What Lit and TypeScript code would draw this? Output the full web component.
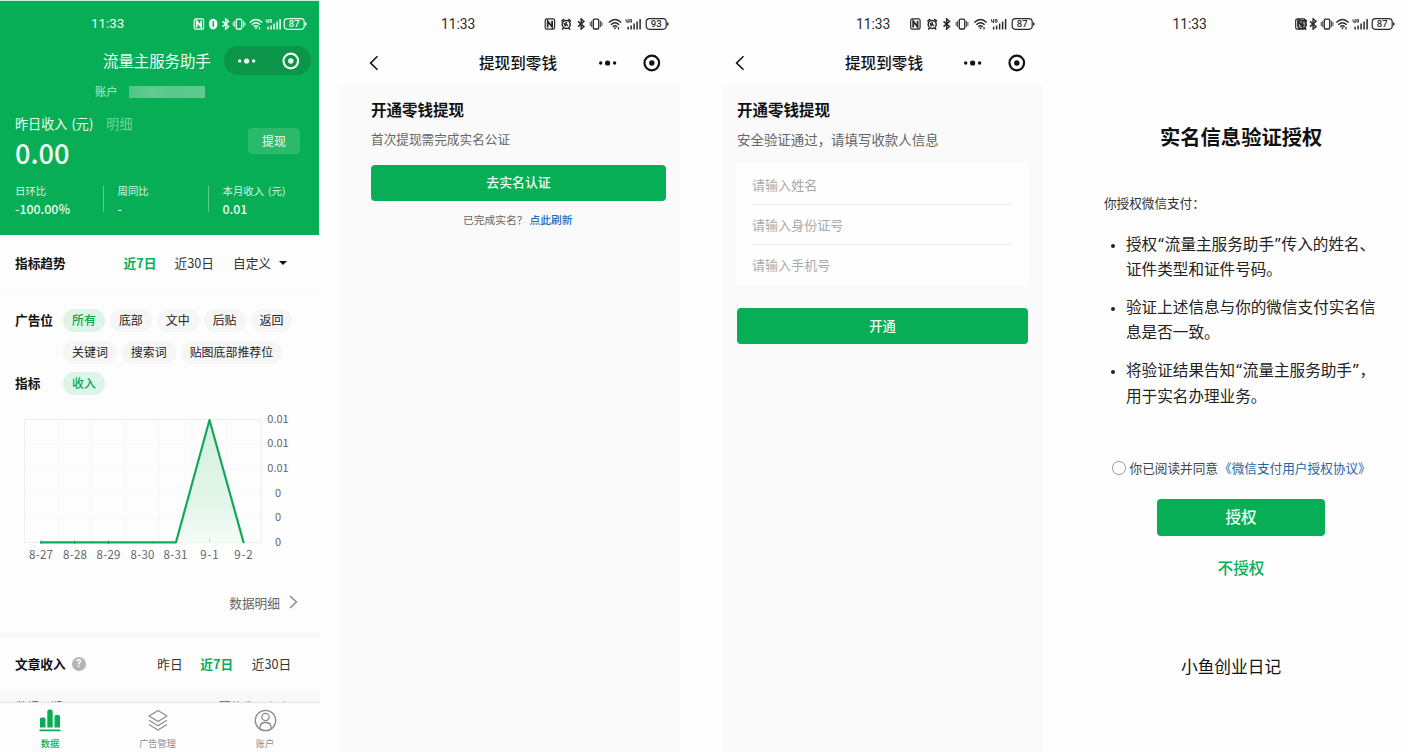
import { LitElement, html, svg, css } from "lit";
import { customElement, property } from "lit/decorators.js";

type Placed = [name: string, x: number];

const glyphs: Record<string, unknown> = {
  nfc: svg`<rect x=".7" y=".9" width="9.4" height="10.2" rx="1.6" fill="none" stroke="currentColor" stroke-width="1.2"/><path d="M3.2 9.4V3.2L7.6 8.8V2.800" fill="none" stroke="currentColor" stroke-width="1.8"/>`,
  alarm: svg`<circle cx="5.2" cy="6.4" r="4" fill="none" stroke="currentColor" stroke-width="1.5"/><path d="M.4 3.400L3.200 1M10 3.400L7.200 1M1.200 11.600l1.8-1.800M9.200 11.600L7.400 9.800M5.200 4v2.600l2 1M3.200 5l1.200 3.400" fill="none" stroke="currentColor" stroke-width="1.500"/>`,
  shield: svg`<path d="M4.600 .8Q9 1 9 6T4.600 11.400Q.4 11 .4 6T4.600 .8Z" fill="currentColor"/><path d="M4.800 3.200v5.600" stroke="#07ae56" stroke-width="1.500"/>`,
  bt: svg`<path d="M1 3.400L7 8.600L4.100 11.200V.8L7 3.400L1 8.600" fill="none" stroke="currentColor" stroke-width="1.400"/>`,
  vibrate: svg`<rect x="3.800" y="1.200" width="5.400" height="9.800" rx="1" fill="none" stroke="currentColor" stroke-width="1.300"/><path d="M.7 4v4M2.200 2.800v6.400M10.900 2.800v6.400M12.400 4v4" stroke="currentColor" stroke-width=".9"/>`,
  wifi: svg`<path d="M.4 4.500Q6.500-1.400 12.600 4.500M2.400 6.700Q6.500 2.800 10.600 6.700M4.300 8.700Q6.500 6.800 8.700 8.700" fill="none" stroke="currentColor" stroke-width="1.500"/><path d="M5 9.600h3l-1.500 2zM9.400 9h1.200v2.400H9.400z" fill="currentColor"/>`,
  signal: svg`<path d="M.6 1.200v2.600h2.400M2.600 1v4.200M4.200 1.600h1.800v2.600H4.400z" fill="none" stroke="currentColor" stroke-width=".9"/><path d="M2.600 11.400V8.800M5.600 11.400V7.400M8.600 11.400V5.600M11.600 11.400V3.600M14.600 11.400V1" stroke="currentColor" stroke-width="1.500"/>`,
};

@customElement("status-bar")
class StatusBar extends LitElement {
  @property({ attribute: false }) icons: Placed[] = [];
  @property({ attribute: false }) timeX = 0;
  @property({ attribute: false }) iconX = 0;
  @property({ attribute: false }) battery: [string, number] = ["87", 100];

  static styles = css`
    :host { display: block; height: 48px; color: #2a2a2a; }
    .row { display: flex; align-items: center; height: 48px; }
    .time { flex: none; font: var(--clock, 13.800px)/48px Roboto, "Noto Sans CJK SC", sans-serif; white-space: nowrap; }
    svg { display: block; flex: none; margin-left: auto; }
    text { font: 500 9.500px Roboto, sans-serif; }
  `;

  render() {
    const [level, bx] = this.battery;
    return html`<div class="row" style="padding-left:${this.timeX}px;width:${this.iconX + 126 - this.timeX}px">
      <span class="time">11:33</span>
      <svg width="126" height="12" viewBox="0 0 126 12">
        ${this.icons.map(([n, x]) => svg`<g transform="translate(${x} 0)">${glyphs[n]}</g>`)}
        <g transform="translate(${bx} 0)">
          <rect x=".7" y=".7" width="20" height="10.600" rx="3.200" fill="none" stroke="currentColor" stroke-width="1.200"/>
          <path d="M22.300 4.600v2.800" stroke="currentColor" stroke-width="1.500"/>
          <text x="10.700" y="9.400" text-anchor="middle" fill="currentColor">${level}</text>
        </g>
      </svg>
    </div>`;
  }
}

const menuIcon = html`<svg width="66" height="20" viewBox="0 0 66 20">
  <g fill="currentColor"><circle cx="2.700" cy="10" r="1.700"/><circle cx="9.600" cy="10" r="2.600"/><circle cx="16.600" cy="10" r="1.700"/><circle cx="53.800" cy="10" r="2.700"/></g>
  <circle cx="53.800" cy="10" r="7.300" fill="none" stroke="currentColor" stroke-width="2.200"/>
</svg>`;
const backIcon = html`<svg width="10" height="16" viewBox="0 0 10 16"><path d="M8.500 1.200L1.600 8l6.900 6.800" fill="none" stroke="currentColor" stroke-width="1.600"/></svg>`;

const days = ["8-27", "8-28", "8-29", "8-30", "8-31", "9-1", "9-2"];
const dayX = [41, 75, 108.500, 142.500, 175.500, 209.500, 243.500];
const scale = ["0.01", "0.01", "0.01", "0", "0", "0"];

@customElement("app-root")
class AppRoot extends LitElement {
  static styles = css`
    :host { display: block; width: 1408px; height: 752px; overflow: hidden; background: #fdfefd;
      font-family: "Noto Sans CJK SC", sans-serif; color: #111; }
    * { box-sizing: border-box; }
    svg { display: block; flex: none; }
    .board { display: grid; grid-template-columns: 340px 383px 337px 348px; height: 752px; }
    .phone { display: flex; flex-direction: column; height: 752px; white-space: nowrap; overflow: hidden; }
    .one { width: 320px; background: #fdfdfe; }
    .two { width: 340px; }
    .three { width: 320px; }
    .four { width: 348px; }

    .hero { width: 319px; height: 235px; background: #07ae56; color: #effcf3; border-top: 1px solid #c9f0dc; flex: none; }
    .hero status-bar { margin-top: -1px; color: #effcf3; --clock: 13.300px; }
    .brand { display: flex; align-items: center; height: 29px; margin-top: -2px; padding-left: 103px; }
    .brand .name { font-size: 15.400px; width: 121px; line-height: 26px; margin-top: -2px; }
    .capsule { width: 87px; height: 29px; border-radius: 15px; background: #0c9449; display: flex; align-items: center; padding-left: 12.500px; }
    .acct { display: flex; align-items: center; height: 20px; margin-top: 6px; padding-left: 95px; font-size: 11.300px; line-height: 18px; color: #b4e8c8; }
    .mask { width: 76px; height: 12px; margin: 2px 0 0 11px; background: linear-gradient(90deg, #51c585, #62cb92 30%, #58c88b 60%, #5fca90); filter: blur(.6px); }
    .income { display: flex; justify-content: space-between; height: 65px; margin-top: 11px; padding: 0 19px 0 15px; }
    .income .cap { font-size: 13.100px; line-height: 24px; display: flex; white-space: pre; }
    .veil { opacity: .45; filter: blur(.6px); margin-left: 13px; }
    .big { font-size: 27.200px; font-weight: 500; line-height: 38px; margin-top: -3px; }
    .draw { width: 52px; height: 26px; margin-top: 16px; border-radius: 4px; background: #2bb96b; font-size: 12px; line-height: 25px; text-align: center; }
    .facts { display: grid; grid-template-columns: 88px 105px 100px; padding-left: 15px; margin-top: 6px; }
    .fact { height: 34px; }
    .fact + .fact { padding-left: 14.500px; background: linear-gradient(#5ccb8b, #5ccb8b) no-repeat 0 3px / 1px 26px; }
    .fact .k { font-size: 10.400px; line-height: 18px; color: #d5f5e0; margin-top: -1px; }
    .unit { margin-left: 4px; }
    .fact .v { font-size: 12.400px; font-weight: 500; line-height: 18px; }

    .bar { display: flex; align-items: center; height: 56px; padding: 1px 0 0 15px; font-size: 12.700px; line-height: 20px; border-bottom: 2px solid #f9f8fa; color: #333; flex: none; }
    .bar b { font-weight: 700; color: #111; }
    .on { color: #07ae56; font-weight: 700; }
    .caret { width: 0; border: 4px solid transparent; border-top: 4.500px solid #111; border-bottom: 0; margin-left: 8px; }
    .filter { display: grid; grid-template-columns: 47px 1fr; padding-left: 15px; font-size: 12.700px; color: #111; flex: none; }
    .filter > span { line-height: 22px; font-weight: 700; }
    .first { margin-top: 18px; }
    .next { margin-top: 8px; }
    .chips { display: flex; flex-wrap: wrap; gap: 9px 5px; padding-left: 1px; }
    .chip { height: 23px; padding: 0 9px; border-radius: 12px; background: #f6f6f7; font-size: 11.950px; line-height: 22px; font-weight: 400; color: #222; }
    .chip.pick { background: #dcf5e6; color: #07a852; font-weight: 500; }
    .chart { margin-top: 5px; }
    .chart text { font-family: "Noto Sans CJK SC", sans-serif; font-size: 11px; fill: #666; }
    .chart .day { font-size: 11.500px; }
    .detail { display: flex; align-items: center; justify-content: flex-end; height: 60px; padding-right: 22px; margin-top: 2px; font-size: 12.700px; color: #666; flex: none; }
    .detail svg { margin-left: 9px; }
    .band { height: 6px; background: #f8f8f9; flex: none; }
    .article { border-bottom: 0; height: 54px; padding: 0 0 3px 15px; }
    .q { width: 14px; height: 14px; border-radius: 50%; background: #b4b4b4; color: #fff; font: 700 11px/14px Roboto, sans-serif; text-align: center; margin: 0 71.500px 0 6px; }
    .peek { height: 10px; overflow: hidden; display: flex; justify-content: space-between; padding: 7px 24px 0 16px; font-size: 11.600px; line-height: 14px; color: #555; background: #f8f8f9; flex: none; }
    .tabs { display: grid; grid-template-columns: 100px 115px 100px; height: 51px; border-top: 1px solid #e3e3e5; color: #8c8c8c; font-size: 9.200px; background: #fdfdfe; flex: none; }
    .tab { display: flex; flex-direction: column; align-items: center; padding-top: 6px; line-height: 14px; gap: 4px; }
    .tab.act { color: #07ae56; font-weight: 500; }

    .nav { display: flex; align-items: center; height: 36px; padding-bottom: 7px; font-weight: 500; font-size: 15.600px; line-height: 28px; }
    .nav .title { margin: -1px 0 0 100px; }
    .two .nav { padding-left: 29px; }
    .two .nav .title { width: 118.500px; }
    .three .nav { padding-left: 12px; }
    .three .nav .title { width: 117.500px; }
    .page { flex: 1; background: #f9faf9; }
    .two .page { padding: 13px 14px 0 31px; }
    .three .page { padding: 13px 15px 0 14px; }
    h2 { margin: 0; font-size: 15.500px; font-weight: 700; line-height: 24px; }
    .sub { font-size: 12.650px; line-height: 20px; margin-top: 8px; color: #666; }
    .three .sub { font-size: 13.450px; }
    .btn { display: block; height: 36px; border-radius: 4px; background: #07ae56; color: #f4fff8; text-align: center; font-weight: 500; font-size: 12.900px; line-height: 34px; }
    .two .btn { margin-top: 15.500px; }
    .hint { font-size: 10.750px; line-height: 18px; margin: 10px 0 0 92px; color: #666; }
    .link { color: #1a6bb8; }
    .hint .link { margin-left: 2px; font-weight: 500; }
    .card { margin: 14px 0 0 -1px; width: 293px; height: 122px; background: #fefefe; border-radius: 4px; padding: 2px 16px 0; }
    .field { height: 40px; font-size: 13.050px; line-height: 39px; color: #aaa; border-bottom: 1px solid #eee; }
    .field:last-child { border-bottom: 0; }
    .three .btn { margin-top: 22.500px; height: 36.500px; font-size: 13.300px; line-height: 35px; }

    h1 { margin: 73px 0 0 100px; font-size: 20.300px; font-weight: 700; line-height: 30px; }
    .lead { margin: 41.500px 0 0 44px; font-size: 12.600px; line-height: 20px; color: #333; }
    ul { list-style: none; margin: 19px 0 0; padding: 0 0 0 51px; font-family: "Noto Sans", "Noto Sans CJK SC", sans-serif; }
    li { display: flex; gap: 11px; margin-bottom: 12.500px; font-size: 15.600px; line-height: 25.400px; color: #222; }
    .dot { width: 4px; height: 4px; border-radius: 50%; background: #222; margin-top: 12px; flex: none; }
    .q1 { margin: 0 1px; }
    .agree { display: flex; align-items: center; margin: 34.500px 0 0 52px; height: 24px; font-size: 12.650px; color: #444; }
    .ring { width: 13.500px; height: 13.500px; border: 1px solid #999; border-radius: 50%; margin-right: 4px; flex: none; }
    .agree .link { color: #2a62a8; margin-left: 1px; }
    .four .btn { width: 168px; height: 36.500px; margin: 19.500px 0 0 97px; font-size: 15.500px; }
    .deny { width: 168px; margin: 19.500px 0 0 97px; text-align: center; color: #07ae56; font-weight: 500; font-size: 15.600px; line-height: 24px; }
    .sign { margin: 74px 0 0 121px; font-size: 16.700px; line-height: 26px; color: #111; }
  `;

  private chart() {
    const y0 = 142.500, y1 = 19.500;
    const cols = [58, 91, 125, 159, 192, 226];
    return html`<svg class="chart" width="319" height="170" viewBox="0 0 319 170">
      <defs><linearGradient id="fade" x1="0" y1="0" x2="0" y2="1"><stop offset="0" stop-color="#d3f0de"/><stop offset=".7" stop-color="#e3f6ea"/><stop offset="1" stop-color="#f6fcf8"/></linearGradient></defs>
      ${cols.map((x) => svg`<path d="M${x} ${y1}V${y0}" stroke="#f6f6f8"/>`)}
      ${[44, 68.500, 93, 118].map((y) => svg`<path d="M24.500 ${y}H261" stroke="#f9f9fa"/>`)}
      <rect x="24.500" y=${y1} width="236.500" height="123" fill="none" stroke="#ededf0"/>
      <path d="M176 ${y0}L209.500 ${y1}L243.500 ${y0}Z" fill="url(#fade)"/>
      <path d="M209.500 ${y0}v-4" stroke="#ccc"/>
      <path d="M41 142.300H176L209.500 20L243.500 142.300" fill="none" stroke="#14a65a" stroke-width="2.200" stroke-linejoin="round" stroke-linecap="round"/>
      <path d="M41 140.500v3.500M74.500 140.500v3.500M108.500 140.500v3.500" stroke="#14a65a"/>
      ${days.map((d, i) => svg`<text class="day" x=${dayX[i]} y="158.500" text-anchor="middle" textLength=${d.length === 4 ? 24 : 18.500}>${d}</text>`)}
      ${scale.map((s, i) => svg`<text x="278" y=${22.500 + i * 24.700} text-anchor="middle">${s}</text>`)}
    </svg>`;
  }

  render() {
    const chips = ["所有", "底部", "文中", "后贴", "返回", "关键词", "搜索词", "贴图底部推荐位"];
    return html`<div class="board">
      <section class="phone one">
        <div class="hero">
          <status-bar .timeX=${91} .iconX=${188} .battery=${["87", 95.500]}
            .icons=${[["nfc", 5.500], ["shield", 20.500], ["bt", 33.500], ["vibrate", 44.500], ["wifi", 61.500], ["signal", 77.500]]}></status-bar>
          <div class="brand"><span class="name">流量主服务助手</span><div class="capsule">${menuIcon}</div></div>
          <div class="acct">账户<span class="mask"></span></div>
          <div class="income">
            <div><div class="cap">昨日收入<span class="unit">(元)</span><span class="veil">明细</span></div><div class="big">0.00</div></div>
            <div class="draw">提现</div>
          </div>
          <div class="facts">
            <div class="fact"><div class="k">日环比</div><div class="v">-100.00%</div></div>
            <div class="fact"><div class="k">周同比</div><div class="v">-</div></div>
            <div class="fact"><div class="k">本月收入<span class="unit">(元)</span></div><div class="v">0.01</div></div>
          </div>
        </div>
        <div class="bar"><b style="width:108.500px">指标趋势</b><span class="on" style="width:51px">近7日</span><span style="width:58.500px">近30日</span><span>自定义</span><i class="caret"></i></div>
        <div class="filter first"><span>广告位</span><div class="chips">${chips.map((c, i) => html`<div class="chip ${i ? "" : "pick"}">${c}</div>`)}</div></div>
        <div class="filter next"><span>指标</span><div class="chips"><div class="chip pick">收入</div></div></div>
        ${this.chart()}
        <div class="detail">数据明细<svg width="9" height="14" viewBox="0 0 9 14"><path d="M1 1l6.500 6L1 13" fill="none" stroke="#888" stroke-width="1.400"/></svg></div>
        <div class="band"></div>
        <div class="bar article"><b>文章收入</b><i class="q">?</i><span style="width:43px">昨日</span><span class="on" style="width:51.500px">近7日</span><span>近30日</span></div>
        <div class="peek"><span>数据日期 ▴</span><span>预估收入 (元) ▴</span></div>
        <div class="tabs">
          <div class="tab act"><svg width="22" height="23" viewBox="0 0 22 23"><path d="M1 18.500V10q0-1.500 1.500-1.500h2.500q1.500 0 1.500 1.500v8.500zM8.300 18.500V2.500q0-2 2-2h1.400q2 0 2 2v16zM15.500 18.500V7.500q0-1.500 1.500-1.500h2.500q1.500 0 1.500 1.500v11zM.5 20.500h21v1.700h-21z" fill="currentColor"/></svg>数据</div>
          <div class="tab"><svg width="22" height="23" viewBox="0 0 22 23"><path d="M11 1.500L20 7l-9 5.500L2 7zM2 11.200l9 5.500 9-5.500M2 15.500l9 5.500 9-5.500" fill="none" stroke="currentColor" stroke-width="1.300" stroke-linejoin="round"/></svg>广告管理</div>
          <div class="tab"><svg width="23" height="23" viewBox="0 0 23 23"><g fill="none" stroke="currentColor" stroke-width="1.300"><circle cx="11.500" cy="11.500" r="10.200"/><circle cx="11.500" cy="8" r="3.600"/><path d="M6 20v-2q0-4.500 5.500-4.500T17 18v2"/></g></svg>账户</div>
        </div>
      </section>

      <section class="phone two">
        <status-bar .timeX=${101} .iconX=${202.500} .battery=${["93", 102.500]}
          .icons=${[["nfc", 1.500], ["alarm", 18], ["bt", 34], ["vibrate", 46.500], ["wifi", 65.500], ["signal", 82.500]]}></status-bar>
        <div class="nav">${backIcon}<span class="title">提现到零钱</span>${menuIcon}</div>
        <div class="page">
          <h2>开通零钱提现</h2>
          <div class="sub">首次提现需完成实名公证</div>
          <div class="btn">去实名认证</div>
          <div class="hint">已完成实名？<span class="link">点此刷新</span></div>
        </div>
      </section>

      <section class="phone three">
        <status-bar .timeX=${133} .iconX=${186} .battery=${["87", 102.500]}
          .icons=${[["nfc", 1], ["alarm", 18], ["bt", 33.500], ["vibrate", 46.500], ["wifi", 65], ["signal", 82]]}></status-bar>
        <div class="nav">${backIcon}<span class="title">提现到零钱</span>${menuIcon}</div>
        <div class="page">
          <h2>开通零钱提现</h2>
          <div class="sub">安全验证通过，请填写收款人信息</div>
          <div class="card">${["请输入姓名", "请输入身份证号", "请输入手机号"].map((t) => html`<div class="field">${t}</div>`)}</div>
          <div class="btn">开通</div>
        </div>
      </section>

      <section class="phone four">
        <status-bar .timeX=${112.500} .iconX=${210} .battery=${["87", 101.500]}
          .icons=${[["nfc", 25], ["alarm", 27], ["bt", 39], ["vibrate", 50.500], ["wifi", 66], ["signal", 82.500]]}></status-bar>
        <h1>实名信息验证授权</h1>
        <div class="lead">你授权微信支付：</div>
        <ul>
          <li><i class="dot"></i><div>授权<span class="q1">“</span>流量主服务助手<span class="q1">”</span>传入的姓名、<br>证件类型和证件号码。</div></li>
          <li><i class="dot"></i><div>验证上述信息与你的微信支付实名信<br>息是否一致。</div></li>
          <li><i class="dot"></i><div>将验证结果告知<span class="q1">“</span>流量主服务助手<span class="q1">”</span>，<br>用于实名办理业务。</div></li>
        </ul>
        <div class="agree"><i class="ring"></i>你已阅读并同意<span class="link">《微信支付用户授权协议》</span></div>
        <div class="btn">授权</div>
        <div class="deny">不授权</div>
        <div class="sign">小鱼创业日记</div>
      </section>
    </div>`;
  }
}
